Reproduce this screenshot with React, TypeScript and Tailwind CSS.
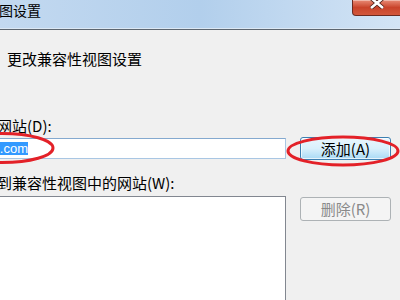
import React from 'react';

const cjk = "font-['SimSun','Noto_Sans_CJK_SC',sans-serif]";

function TitleBar() {
  return (
    <div className="relative flex h-[30px] shrink-0 border-b border-[#5d6670] bg-gradient-to-r from-[#c3d9f0] via-[#b2cfec] to-[#d3e4f5]">
      <div className="absolute inset-x-0 bottom-0 h-px bg-[#dce8f4]" />
      <span className={`${cjk} ml-[-57px] mt-[1px] text-[14px] leading-[18px] text-black`}>兼容性视图设置</span>
      {/* close button */}
      <div className="ml-auto mr-[-6px] flex h-[16px] w-[54px] items-start justify-center rounded-b-[4px] border border-t-0 border-[#6b2a20] bg-gradient-to-b from-[#e88a75] via-[#c9432a] to-[#d2573b] shadow-[inset_0_1px_0_rgba(255,255,255,0.4)]">
        <svg width="16" height="11" viewBox="0 0 16 11" className="mt-[-2px] mr-[4px]">
          <path d="M2 0 L8 5 L14 0 M2 10 L8 5 L14 10" stroke="#4a1d16" strokeWidth="4.2" fill="none" />
          <path d="M2 0 L8 5 L14 0 M2 10 L8 5 L14 10" stroke="#ffffff" strokeWidth="2.6" fill="none" />
        </svg>
      </div>
    </div>
  );
}

export default function App() {
  return (
    <div className="relative h-[300px] w-[400px] overflow-hidden bg-[#f0f0f0] text-black">
      <TitleBar />

      <div className={`${cjk} pl-[7px] pt-[19px] text-[15px] leading-[20px]`}>更改兼容性视图设置</div>

      <div className="ml-[-48px] mt-[48px] flex flex-col">
        <div className={`${cjk} text-[15px] leading-[18px]`}>添加此网站(D):</div>

        <div className="mt-[3px] flex items-start gap-[14px]">
          {/* url input */}
          <div className="flex h-[21px] w-[334px] items-center border border-[#a9c6e3] border-t-[#84a9cf] bg-white pl-[2px]">
            <div className="flex w-[73px] justify-end overflow-hidden">
              <span className="whitespace-nowrap bg-[#3399ff] font-['Liberation_Sans',sans-serif] text-[13px] leading-[13px] text-white">www.baidu.com</span>
            </div>
          </div>
          <button className={`${cjk} mt-[-1px] h-[23px] w-[91px] rounded-[3px] border border-[#3c7fb1] bg-gradient-to-b from-[#eaf6fd] via-[#d9f0fc] to-[#a9daf5] text-[15px] leading-[19px] shadow-[inset_0_0_0_1px_rgba(255,255,255,0.7)]`}>
            添加(A)
          </button>
        </div>

        <div className={`${cjk} mt-[14px] text-[15px] leading-[18px]`}>已添加到兼容性视图中的网站(W):</div>

        <div className="mt-[4px] flex items-start gap-[14px]">
          <div className="h-[120px] w-[334px] border border-[#828790] bg-white" />
          <button className={`${cjk} mt-[1px] h-[24px] w-[91px] rounded-[3px] border border-[#adb2b5] bg-[#f4f4f4] text-[15px] leading-[20px] text-[#8a8a8a]`}>
            删除(R)
          </button>
        </div>
      </div>

      {/* red annotation circles */}
      <svg className="pointer-events-none absolute left-0 top-0" width="400" height="300">
        <ellipse cx="2" cy="148" rx="51" ry="14.5" fill="none" stroke="#e32128" strokeWidth="3" />
        <ellipse cx="343" cy="151" rx="55" ry="14" fill="none" stroke="#e32128" strokeWidth="3" />
      </svg>
    </div>
  );
}
